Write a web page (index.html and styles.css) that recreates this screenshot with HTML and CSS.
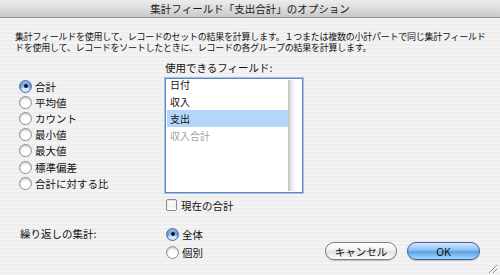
FILE: index.html
```html
<!DOCTYPE html>
<html lang="ja">
<head>
<meta charset="utf-8">
<title>集計フィールド「支出合計」のオプション</title>
<link rel="stylesheet" href="styles.css">
</head>
<body>
<div class="window">
  <div class="titlebar">集計フィールド「支出合計」のオプション</div>
  <div class="desc">
    <div class="desc-line">集計フィールドを使用して、レコードのセットの結果を計算します。１つまたは複数の小計パートで同じ集計フィールド</div>
    <div class="desc-line">ドを使用して、レコードをソートしたときに、レコードの各グループの結果を計算します。</div>
  </div>
  <div class="main">
    <div class="calc-list">
      <label class="opt"><span class="radio on"></span>合計</label>
      <label class="opt"><span class="radio"></span>平均値</label>
      <label class="opt"><span class="radio"></span>カウント</label>
      <label class="opt"><span class="radio"></span>最小値</label>
      <label class="opt"><span class="radio"></span>最大値</label>
      <label class="opt"><span class="radio"></span>標準偏差</label>
      <label class="opt"><span class="radio"></span>合計に対する比</label>
    </div>
    <div class="fields">
      <div class="fields-label">使用できるフィールド:</div>
      <div class="listbox">
        <ul class="items">
          <li>日付</li>
          <li>収入</li>
          <li class="selected">支出</li>
          <li class="disabled">収入合計</li>
        </ul>
        <div class="track"></div>
      </div>
      <label class="check-row"><span class="checkbox"></span>現在の合計</label>
    </div>
  </div>
  <div class="footer">
    <div class="repeat-label">繰り返しの集計:</div>
    <div class="repeat-radios">
      <label class="opt2"><span class="radio on"></span>全体</label>
      <label class="opt2"><span class="radio"></span>個別</label>
    </div>
    <div class="buttons">
      <button class="btn">キャンセル</button>
      <button class="btn default">OK</button>
    </div>
  </div>
  <svg class="grip" width="12" height="12" viewBox="0 0 12 12">
    <path d="M11 3 L3 11 M11 7 L7 11" stroke="#8a8a8a" stroke-width="1"/>
    <path d="M11 4 L4 11 M11 8 L8 11" stroke="#ffffff" stroke-width="1"/>
  </svg>
</div>
</body>
</html>
```
FILE: styles.css
```css
* { box-sizing: border-box; }
html, body { margin: 0; padding: 0; }
body {
  width: 500px;
  height: 275px;
  overflow: hidden;
  font-family: "Noto Sans CJK JP", "Noto Sans", sans-serif;
  color: #111;
}
.window {
  position: relative;
  width: 500px;
  height: 275px;
  background: repeating-linear-gradient(180deg, #eeeeee 0 2px, #f3f3f3 2px 4px);
}
.titlebar {
  height: 18px;
  line-height: 17px;
  text-align: center;
  font-size: 10.5px;
  color: #1a1a1a;
  background: linear-gradient(180deg, #ececec 0%, #dcdcdc 50%, #c9c9c9 100%);
  border-bottom: 1px solid #8f8f8f;
}
.desc {
  display: flex;
  flex-direction: column;
  gap: 1px;
  margin: 14px 0 0 15px;
  height: 21px;
  font-size: 9px;
  letter-spacing: -0.25px;
  white-space: nowrap;
}
.desc-line {
  height: 10px;
  line-height: 10px;
  font-size: 9px;
}
.main {
  display: grid;
  grid-template-columns: 146px 138px;
  padding-left: 19px;
  margin-top: 8px;
  font-size: 10.5px;
}
.calc-list {
  display: flex;
  flex-direction: column;
  padding-top: 17px;
}
.opt {
  display: flex;
  align-items: center;
  gap: 3px;
  height: 16.2px;
}
.radio {
  width: 13px;
  height: 13px;
  border-radius: 50%;
  border: 1px solid #8d8d8d;
  background: radial-gradient(circle at 50% 70%, #ffffff 0 35%, #e6e6e6 80%), #fff;
  box-shadow: inset 0 1px 1px rgba(0,0,0,0.15);
  flex: none;
  position: relative;
}
.radio.on {
  border-color: #4a6daa;
  background: radial-gradient(circle at 50% 85%, #cfeaff 0 25%, transparent 60%),
              linear-gradient(180deg, #a6cdf2 0%, #5d9be0 45%, #3f86d6 55%, #9fd2f8 100%);
}
.radio.on::after {
  content: "";
  position: absolute;
  left: 3.5px;
  top: 3.5px;
  width: 4px;
  height: 4px;
  border-radius: 50%;
  background: #111;
}
.fields {
  display: flex;
  flex-direction: column;
}
.fields-label {
  height: 14px;
  line-height: 14px;
  margin-bottom: 3px;
}
.listbox {
  display: flex;
  height: 115px;
  border: 1px solid #5d87c2;
  box-shadow: 0 0 0 1px #a7c3e7;
  background: #fff;
  overflow: hidden;
  padding: 1px;
}
.items {
  flex: 1;
  list-style: none;
  margin: -4px 0 0 0;
  padding: 0;
}
.items li {
  height: 17px;
  line-height: 17px;
  padding-left: 3px;
  font-size: 10px;
}
.items li.selected { background: #b6d5fb; }
.items li.disabled { color: #a2a2a2; }
.track {
  width: 13px;
  background: linear-gradient(90deg, #bdbdbd 0, #dcdcdc 2px, #f4f4f4 5px, #ffffff 8px);
}
.check-row {
  display: flex;
  align-items: center;
  gap: 4px;
  height: 14px;
  margin-top: 5px;
  padding-left: 1px;
}
.checkbox {
  width: 11px;
  height: 12px;
  border: 1px solid #8a8a8a;
  border-radius: 2px;
  background: linear-gradient(180deg, #ffffff 0%, #f0f0f0 60%, #ffffff 100%);
  box-shadow: inset 0 1px 1px rgba(0,0,0,0.12);
  flex: none;
}
.footer {
  display: grid;
  grid-template-columns: 146px 1fr auto;
  padding-left: 19px;
  padding-right: 20px;
  margin-top: 13px;
  font-size: 10.5px;
}
.repeat-label {
  height: 18px;
  line-height: 18px;
  padding-left: 1px;
}
.repeat-radios {
  display: flex;
  flex-direction: column;
  padding-left: 1px;
}
.opt2 {
  display: flex;
  align-items: center;
  gap: 3px;
  height: 18px;
}
.buttons {
  display: flex;
  gap: 10px;
  align-self: end;
  margin-bottom: 1px;
}
.btn {
  font-family: "Noto Sans CJK JP", "Noto Sans", sans-serif;
  font-size: 10.5px;
  height: 18px;
  line-height: 15px;
  padding: 0;
  width: 72px;
  border-radius: 9px;
  border: 1px solid #7e7e7e;
  color: #111;
  background: linear-gradient(180deg, #ffffff 0%, #f2f2f2 45%, #e2e2e2 55%, #ffffff 100%);
  box-shadow: 0 1px 1px rgba(0,0,0,0.2);
}
.btn.default {
  width: 73px;
  border-color: #3c5da6;
  background: linear-gradient(180deg, #d3e8fb 0%, #8cc0f0 45%, #5aa2e6 55%, #a7d6fb 100%);
}
.grip {
  position: absolute;
  right: 2px;
  bottom: 1px;
}
```
